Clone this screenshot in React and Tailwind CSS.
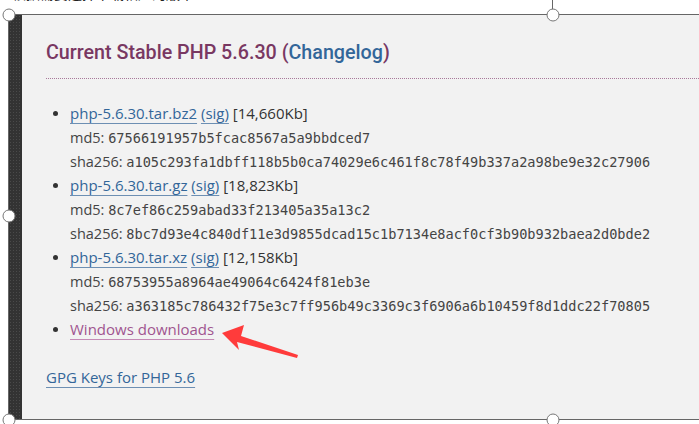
import React from 'react';

const sans = { fontFamily: '"Open Sans", "Noto Sans", sans-serif' };

const Handle = ({ className }) => (
  <span
    className={`absolute w-[13px] h-[13px] rounded-full bg-white border border-[#777] -translate-x-1/2 -translate-y-1/2 ${className}`}
  />
);

const files = [
  {
    name: 'php-5.6.30.tar.bz2',
    size: '[14,660Kb]',
    md5: '67566191957b5fcac8567a5a9bbdced7',
    sha: 'a105c293fa1dbff118b5b0ca74029e6c461f8c78f49b337a2a98be9e32c27906',
  },
  {
    name: 'php-5.6.30.tar.gz',
    size: '[18,823Kb]',
    md5: '8c7ef86c259abad33f213405a35a13c2',
    sha: '8bc7d93e4c840df11e3d9855dcad15c1b7134e8acf0cf3b90b932baea2d0bde2',
  },
  {
    name: 'php-5.6.30.tar.xz',
    size: '[12,158Kb]',
    md5: '68753955a8964ae49064c6424f81eb3e',
    sha: 'a363185c786432f75e3c7ff956b49c3369c3f6906a6b10459f8d1ddc22f70805',
  },
];

const Bullet = () => <span className="w-[5px] h-[5px] rounded-full bg-[#333] shrink-0" />;

const Hash = ({ label, value }) => (
  <div className="h-6 leading-6 text-[#444] whitespace-nowrap">
    <span className="text-[14.5px]">{label}: </span>
    <span style={{ fontFamily: '"DejaVu Sans Mono", monospace' }} className="text-[13.6px]">
      {value}
    </span>
  </div>
);

const link = 'text-[#336699] underline decoration-[#6d8fb3] underline-offset-[4px]';

export default function App() {
  return (
    <div className="relative w-[699px] h-[424px] bg-white overflow-hidden" style={sans}>
      <div className="h-[14px] overflow-hidden pl-[12px]">
        <p
          className="text-[14px] leading-[14px] mt-[-14px] text-[#222]"
          style={{ fontFamily: '"Noto Sans CJK SC", sans-serif' }}
        >
          根据需要选择下载相应的版本
        </p>
      </div>

      <div className="ml-[8px] h-[406px] flex border-t border-b border-l border-[#666]">
        <div className="w-[13px] bg-[#333] bg-[radial-gradient(#4a4a4a_1px,transparent_1px)] bg-[length:3px_3px]" />
        <div className="flex-1 bg-[#f2f2f2] pl-[24px] pt-[24px] text-[#333]">
          <h3
            className="text-[19.7px] leading-[28px] font-medium text-[#793862] pb-[11px] border-b border-dotted border-[#a8799a]"
            style={{ fontFamily: 'Roboto, "Open Sans", sans-serif' }}
          >
            Current Stable PHP 5.6.30 (<span className="text-[#336699]">Changelog</span>)
          </h3>

          <ul className="mt-[22px] pl-[7px] text-[15px] leading-6 flex flex-col">
            {files.map((f) => (
              <li key={f.name} className="flex gap-[12px]">
                <span className="h-6 flex items-center">
                  <Bullet />
                </span>
                <div className="flex flex-col">
                  <div className="h-6 whitespace-nowrap">
                    <a className={link}>{f.name}</a> <a className={link}>(sig)</a> <span>{f.size}</span>
                  </div>
                  <Hash label="md5" value={f.md5} />
                  <Hash label="sha256" value={f.sha} />
                </div>
              </li>
            ))}
            <li className="flex gap-[12px]">
              <span className="h-6 flex items-center">
                <Bullet />
              </span>
              <a className="h-6 text-[#a0558f] underline decoration-[#c48ab5] underline-offset-[4px]">
                Windows downloads
              </a>
            </li>
          </ul>

          <p className="mt-6 text-[15px] leading-6">
            <a className={link}>GPG Keys for PHP 5.6</a>
          </p>
        </div>
      </div>

      <svg className="absolute left-0 top-0 pointer-events-none" width="699" height="424">
        <polygon points="222,333 244,325 241,336 298,355 297,358 237,342 239,350" fill="#ff3b3b" />
        <line x1="552.5" y1="0" x2="552.5" y2="14" stroke="#666" strokeWidth="1" />
      </svg>

      <Handle className="left-[8.5px] top-[14.5px]" />
      <Handle className="left-[552.5px] top-[14.5px]" />
      <Handle className="left-[8.5px] top-[216px]" />
      <Handle className="left-[8.5px] top-[419.5px]" />
      <Handle className="left-[552.5px] top-[419.5px]" />
    </div>
  );
}
